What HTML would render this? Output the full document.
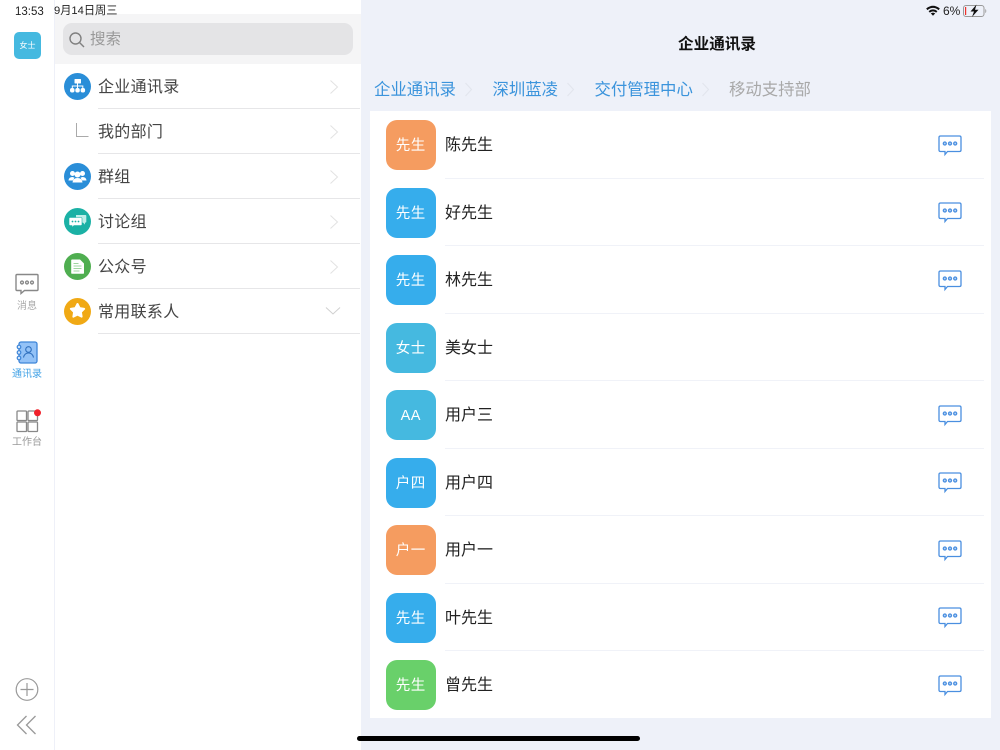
<!DOCTYPE html>
<html lang="zh"><head><meta charset="utf-8"><title>企业通讯录</title>
<style>
*{margin:0;padding:0;box-sizing:border-box}
html,body{width:1000px;height:750px;overflow:hidden;background:#fff}
body{position:relative;font-family:"Liberation Sans","Noto Sans CJK SC",sans-serif}
.a{position:absolute}
.t{position:absolute;white-space:nowrap;line-height:20px;height:20px}
.sep{position:absolute;height:1px;background:#e6e6e8;left:98px;width:262px}
.li{left:98px;font-size:16px;color:#444;letter-spacing:.3px}
.av{position:absolute;left:386px;width:49.500px;height:50px;border-radius:11px;color:#fff;font-size:14.500px;line-height:52px;text-align:center;letter-spacing:.5px}
.nm{left:445px;font-size:16px;color:#222}
.rs{position:absolute;left:445px;width:539px;height:1px;background:#f0f2f8}
.bc{top:80px;font-size:16.400px;color:#3b94dc}
svg{position:absolute;overflow:visible}
</style></head><body>

<!-- left rail -->
<div class="a" style="left:54px;top:0;width:1px;height:750px;background:#eef0f8"></div>
<div class="a" style="left:14px;top:32px;width:27px;height:27px;border-radius:5px;background:#45b9e0;color:#fff;font-size:8px;line-height:27px;text-align:center">女士</div>

<svg style="left:15px;top:273px" width="24" height="24" viewBox="0 0 24 24" fill="none" stroke="#888" stroke-width="1.400"><path d="M1 2.500q0-1 1-1h20q1 0 1 1v14q0 1-1 1H9.500l-3.500 3v-3H2q-1 0-1-1z"/><circle cx="7" cy="9.500" r="1.400"/><circle cx="12" cy="9.500" r="1.400"/><circle cx="17" cy="9.500" r="1.400"/></svg>
<div class="t" style="left:17px;top:297px;font-size:10px;color:#aaa">消息</div>

<svg style="left:16px;top:341px" width="22" height="24" viewBox="0 0 22 24"><rect x="3" y="1" width="18" height="21" rx="2" fill="#93c2f7" stroke="#3f86d8" stroke-width="1.300"/><g fill="#d3e6fb" stroke="#3f86d8" stroke-width="1.200"><circle cx="3" cy="6" r="1.800"/><circle cx="3" cy="11.500" r="1.800"/><circle cx="3" cy="17" r="1.800"/></g><g fill="none" stroke="#2f6fbd" stroke-width="1.100"><circle cx="12.500" cy="8.500" r="2.800"/><path d="M7.500 16.500q1-4.500 5-4.500t5 4.500"/></g></svg>
<div class="t" style="left:12px;top:365px;font-size:10px;color:#45a3e6">通讯录</div>

<svg style="left:16px;top:409px" width="24" height="24" viewBox="0 0 24 24" fill="none" stroke="#888" stroke-width="1.300"><rect x="1" y="2" width="9.500" height="9.500" rx=".8"/><rect x="12" y="2" width="9.500" height="9.500" rx=".8"/><rect x="1" y="13" width="9.500" height="9.500" rx=".8"/><rect x="12" y="13" width="9.500" height="9.500" rx=".8"/><circle cx="21.500" cy="3.800" r="3.500" fill="#f0202a" stroke="none"/></svg>
<div class="t" style="left:12px;top:433px;font-size:10px;color:#999">工作台</div>

<svg style="left:15px;top:678px" width="24" height="24" viewBox="0 0 24 24" fill="none" stroke="#999" stroke-width="1.200"><circle cx="12" cy="11.500" r="10.800"/><path d="M5.500 11.500h13M12 5v13"/></svg>
<svg style="left:16px;top:715px" width="22" height="20" viewBox="0 0 22 20" fill="none" stroke="#999" stroke-width="1.300"><path d="M10.500 1 1.500 10l9 9M19.500 1l-9 9 9 9"/></svg>

<!-- list column -->
<div class="a" style="left:55px;top:14px;width:306px;height:50px;background:#f5f5f6"></div>
<div class="a" style="left:63px;top:23px;width:290px;height:32px;background:#e4e4e6;border-radius:9px"></div>
<svg style="left:69px;top:31.500px" width="16" height="16" viewBox="0 0 16 16" fill="none" stroke="#808080" stroke-width="1.400"><circle cx="6.500" cy="6.500" r="5.500"/><path d="m10.500 10.500 4.500 4.500"/></svg>
<div class="t" style="left:90px;top:29px;font-size:15.500px;color:#999;line-height:21px">搜索</div>

<svg style="left:64px;top:73px" width="27" height="27" viewBox="0 0 27 27"><circle cx="13.500" cy="13.500" r="13.500" fill="#2a8ed8"/><g fill="#fff"><rect x="10.500" y="6" width="6.500" height="4.500" rx=".6"/><rect x="6" y="15" width="4.500" height="4.500" rx="2"/><rect x="11.300" y="15" width="4.500" height="4.500" rx="2"/><rect x="16.600" y="15" width="4.500" height="4.500" rx="2"/></g><path d="M13.500 10v5M8.300 15.500v-2.500h10.500v2.500" fill="none" stroke="#fff" stroke-width="1"/></svg>
<div class="t li" style="top:78px">企业通讯录</div>
<svg style="left:329px;top:79px" width="10" height="16" viewBox="0 0 10 16" fill="none" stroke="#e2e2e2" stroke-width="1"><path d="m1.500 1.500 7 6.500-7 6.500"/></svg>
<div class="sep" style="top:108px"></div>

<svg style="left:75px;top:123px" width="15" height="15" viewBox="0 0 15 15" fill="none" stroke="#aaa" stroke-width="1"><path d="M1.500 0v13.500h12"/></svg>
<div class="t li" style="top:123px">我的部门</div>
<svg style="left:329px;top:124px" width="10" height="16" viewBox="0 0 10 16" fill="none" stroke="#e2e2e2" stroke-width="1"><path d="m1.500 1.500 7 6.500-7 6.500"/></svg>
<div class="sep" style="top:153px"></div>

<svg style="left:64px;top:163px" width="27" height="27" viewBox="0 0 27 27"><circle cx="13.500" cy="13.500" r="13.500" fill="#2a8ed8"/><g fill="#fff"><circle cx="8.500" cy="10.500" r="2.500"/><circle cx="18.500" cy="10.500" r="2.500"/><path d="M4.500 17.500q.3-3.500 4-3.500l2 .6-1.500 2.900zM22.500 17.500q-.3-3.500-4-3.500l-2 .6 1.500 2.900z"/><circle cx="13.500" cy="11.500" r="3"/><path d="M8.500 19.500q.5-4.500 5-4.500t5 4.500z"/></g></svg>
<div class="t li" style="top:168px">群组</div>
<svg style="left:329px;top:169px" width="10" height="16" viewBox="0 0 10 16" fill="none" stroke="#e2e2e2" stroke-width="1"><path d="m1.500 1.500 7 6.500-7 6.500"/></svg>
<div class="sep" style="top:198px"></div>

<svg style="left:64px;top:208px" width="27" height="27" viewBox="0 0 27 27"><circle cx="13.500" cy="13.500" r="13.500" fill="#1bb1a5"/><path d="M12 7h9.500q.8 0 .8.800v6q0 .8-.8.800H21v2l-2-2h-7z" fill="#bfeee9"/><path d="M6 9.500h11q1 0 1 1v6q0 1-1 1H10l-2 2v-2H6q-1 0-1-1v-6q0-1 1-1z" fill="#fff" stroke="#1bb1a5" stroke-width=".6"/><g fill="#1bb1a5"><circle cx="8.500" cy="13.500" r=".9"/><circle cx="11.500" cy="13.500" r=".9"/><circle cx="14.500" cy="13.500" r=".9"/></g></svg>
<div class="t li" style="top:213px">讨论组</div>
<svg style="left:329px;top:214px" width="10" height="16" viewBox="0 0 10 16" fill="none" stroke="#e2e2e2" stroke-width="1"><path d="m1.500 1.500 7 6.500-7 6.500"/></svg>
<div class="sep" style="top:243px"></div>

<svg style="left:64px;top:253px" width="27" height="27" viewBox="0 0 27 27"><circle cx="13.500" cy="13.500" r="13.500" fill="#4fae50"/><path d="M8 6.500h8l4 4v9.500q0 .8-.8.800H8q-.8 0-.8-.8V7.300q0-.8.800-.8z" fill="#fff"/><path d="M9.500 10.500h5M9.500 13h8M9.500 15.500h8M9.500 18h6" stroke="#9fd6a0" stroke-width="1" fill="none"/></svg>
<div class="t li" style="top:258px">公众号</div>
<svg style="left:329px;top:259px" width="10" height="16" viewBox="0 0 10 16" fill="none" stroke="#e2e2e2" stroke-width="1"><path d="m1.500 1.500 7 6.500-7 6.500"/></svg>
<div class="sep" style="top:288px"></div>

<svg style="left:64px;top:298px" width="27" height="27" viewBox="0 0 27 27"><circle cx="13.500" cy="13.500" r="13.500" fill="#f0a915"/><path d="M13.500 6 15.600 10.100 20.160 10.840 16.900 14.100 17.610 18.660 13.500 16.600 9.390 18.660 10.100 14.100 6.840 10.840 11.400 10.100z" fill="#fff" stroke="#fff" stroke-width="2" stroke-linejoin="round"/></svg>
<div class="t li" style="top:303px">常用联系人</div>
<svg style="left:325px;top:306px" width="16" height="10" viewBox="0 0 16 10" fill="none" stroke="#d0d0d0" stroke-width="1"><path d="m1 1.500 7 6.500 7-6.500"/></svg>
<div class="sep" style="top:333px"></div>

<!-- status bar text stays above the search band -->
<div class="t" style="left:15px;top:2px;font-size:11.500px;color:#222;z-index:5">13:53</div>
<div class="t" style="left:54px;top:1px;font-size:11.200px;color:#222;z-index:5">9月14日周三</div>

<!-- right panel -->
<div class="a" style="left:361px;top:0;width:639px;height:750px;background:#eef1f9"></div>
<svg style="left:926px;top:5px" width="14" height="11" viewBox="0 0 14 11" fill="none" stroke="#111" stroke-width="2"><path d="M.8 4.300q6.200-5 12.400 0M3.200 6.900q3.800-3 7.600 0"/><path d="m7 10.800-2.200-2.400q2.200-1.500 4.400 0z" fill="#111" stroke="none"/></svg>
<div class="t" style="left:943px;top:1px;font-size:12px;color:#222">6%</div>
<svg style="left:962.500px;top:5px" width="25" height="12" viewBox="0 0 25 12"><rect x=".5" y=".5" width="20.500" height="11" rx="2.500" fill="none" stroke="#999"/><rect x="2" y="2" width="1.200" height="8" fill="#f0302a"/><path d="M22.300 4v4q1-.5 1-2t-1-2z" fill="#999"/><path d="M13.500-.5 7.500 6.500h3.500L9 12l6.500-7.300H12z" fill="#111"/></svg>

<div class="t" style="left:678px;top:35px;font-size:15.600px;font-weight:700;color:#111">企业通讯录</div>

<div class="t bc" style="left:374px">企业通讯录</div>
<svg style="left:464px;top:82px" width="10" height="15" viewBox="0 0 10 15" fill="none" stroke="#e2e5ed" stroke-width="1.100"><path d="m1.500 1 6 6.500-6 6.500"/></svg>
<div class="t bc" style="left:492.500px">深圳蓝凌</div>
<svg style="left:566px;top:82px" width="10" height="15" viewBox="0 0 10 15" fill="none" stroke="#e2e5ed" stroke-width="1.100"><path d="m1.500 1 6 6.500-6 6.500"/></svg>
<div class="t bc" style="left:594.500px">交付管理中心</div>
<svg style="left:701px;top:82px" width="10" height="15" viewBox="0 0 10 15" fill="none" stroke="#e2e5ed" stroke-width="1.100"><path d="m1.500 1 6 6.500-6 6.500"/></svg>
<div class="t bc" style="left:729px;color:#a8a8a8">移动支持部</div>

<div class="a" style="left:370px;top:111px;width:621px;height:607px;background:#fff"></div>

<div class="av" style="top:120px;background:#f59c60">先生</div><div class="t nm" style="top:136px">陈先生</div><div class="rs" style="top:178px"></div>
<div class="av" style="top:187.500px;background:#36adec">先生</div><div class="t nm" style="top:203.500px">好先生</div><div class="rs" style="top:245px"></div>
<div class="av" style="top:255px;background:#36adec">先生</div><div class="t nm" style="top:271px">林先生</div><div class="rs" style="top:313px"></div>
<div class="av" style="top:322.500px;background:#45b9e0">女士</div><div class="t nm" style="top:338.500px">美女士</div><div class="rs" style="top:380px"></div>
<div class="av" style="top:390px;background:#45b9e0">AA</div><div class="t nm" style="top:406px">用户三</div><div class="rs" style="top:448px"></div>
<div class="av" style="top:457.500px;background:#36adec">户四</div><div class="t nm" style="top:473.500px">用户四</div><div class="rs" style="top:515px"></div>
<div class="av" style="top:525px;background:#f59c60">户一</div><div class="t nm" style="top:541px">用户一</div><div class="rs" style="top:583px"></div>
<div class="av" style="top:592.500px;background:#36adec">先生</div><div class="t nm" style="top:608.500px">叶先生</div><div class="rs" style="top:650px"></div>
<div class="av" style="top:660px;background:#69d06a">先生</div><div class="t nm" style="top:676px">曾先生</div>

<svg width="0" height="0" style="position:absolute"><defs><g id="c" fill="none" stroke="#4a8fe0" stroke-width="1.300"><path d="M1 2.500q0-1.500 1.500-1.500h19Q23 1 23 2.500v12.500q0 1.500-1.500 1.500H9.500l-2.500 3v-3H2.500Q1 16.500 1 15z"/><circle cx="6.800" cy="8.500" r="1.500" fill="#bcd5f5"/><circle cx="12" cy="8.500" r="1.500" fill="#bcd5f5"/><circle cx="17.200" cy="8.500" r="1.500" fill="#bcd5f5"/></g></defs></svg>
<svg style="left:937.500px;top:134.500px" width="24" height="21"><use href="#c"/></svg>
<svg style="left:937.500px;top:202px" width="24" height="21"><use href="#c"/></svg>
<svg style="left:937.500px;top:269.500px" width="24" height="21"><use href="#c"/></svg>
<svg style="left:937.500px;top:404.500px" width="24" height="21"><use href="#c"/></svg>
<svg style="left:937.500px;top:472px" width="24" height="21"><use href="#c"/></svg>
<svg style="left:937.500px;top:539.500px" width="24" height="21"><use href="#c"/></svg>
<svg style="left:937.500px;top:607px" width="24" height="21"><use href="#c"/></svg>
<svg style="left:937.500px;top:674.500px" width="24" height="21"><use href="#c"/></svg>

<div class="a" style="left:357px;top:736px;width:283px;height:5px;background:#000;border-radius:3px"></div>
</body></html>
